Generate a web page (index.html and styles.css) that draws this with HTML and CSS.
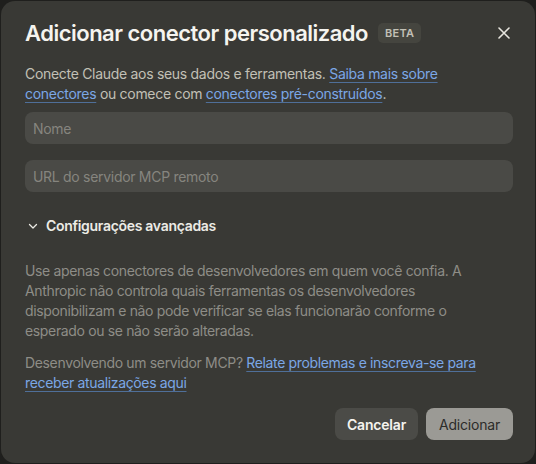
FILE: index.html
```html
<!DOCTYPE html>
<html lang="pt-BR">
<head>
    <meta charset="UTF-8">
    <meta name="viewport" content="width=device-width, initial-scale=1.0">
    <title>Adicionar conector personalizado</title>
    <link rel="stylesheet" href="styles.css">
</head>
<body>

    <div class="dialog">
        <div class="dialog-header">
            <h1>Adicionar conector personalizado</h1>
            <span class="badge">BETA</span>
            <button class="close" type="button" aria-label="Fechar">
                <svg width="14" height="14" viewBox="0 0 14 14"><path d="M2 2 L12 12 M12 2 L2 12" stroke="currentColor" stroke-width="1.6" stroke-linecap="round"/></svg>
            </button>
        </div>

        <p class="intro">Conecte Claude aos seus dados e ferramentas. <a href="#">Saiba mais sobre conectores</a> ou comece com <a href="#">conectores pré-construídos</a>.</p>

        <div class="fields">
            <input type="text" placeholder="Nome">
            <input type="text" placeholder="URL do servidor MCP remoto">
        </div>

        <button class="advanced" type="button">
            <svg width="12" height="12" viewBox="0 0 12 12"><path d="M2.5 4.5 L6 8 L9.5 4.5" fill="none" stroke="currentColor" stroke-width="1.3" stroke-linecap="round" stroke-linejoin="round"/></svg>
            Configurações avançadas
        </button>

        <p class="note note-warning">Use apenas conectores de desenvolvedores em quem você confia. A Anthropic não controla quais ferramentas os desenvolvedores disponibilizam e não pode verificar se elas funcionarão conforme o esperado ou se não serão alteradas.</p>

        <p class="note">Desenvolvendo um servidor MCP? <a href="#">Relate problemas e inscreva-se para receber atualizações aqui</a></p>

        <div class="actions">
            <button class="btn btn-cancel" type="button">Cancelar</button>
            <button class="btn btn-add" type="button">Adicionar</button>
        </div>
    </div>

</body>
</html>
```

FILE: styles.css
```css
body {
    margin: 0;
    padding: 1px;
    background-color: #1f1f1d;
    font-family: Inter, "Noto Sans", sans-serif;
    width: 534px;
    height: 462px;
}
.dialog {
    box-sizing: border-box;
    height: 462px;
    background-color: #393935;
    border-radius: 14px;
    padding: 18px 22px 0 24px;
    letter-spacing: -0.3px;
}
.dialog-header {
    display: flex;
    align-items: center;
    height: 28px;
}
.dialog-header h1 {
    margin: 0;
    font-size: 22px;
    font-weight: 600;
    letter-spacing: -0.5px;
    color: #f5f4ef;
}
.badge {
    margin-left: 10px;
    padding: 3px 7px;
    background-color: #45453f;
    border-radius: 5px;
    font-size: 11px;
    font-weight: 600;
    color: #c2c0b6;
    letter-spacing: 0.3px;
}
.close {
    margin-left: auto;
    margin-right: 2px;
    padding: 0;
    background: none;
    border: none;
    color: #e8e6df;
    display: flex;
    cursor: pointer;
}
.intro {
    max-width: 470px;
    margin: 17px 0 0;
    font-size: 14px;
    line-height: 20px;
    color: #c2c0b6;
}
a {
    color: #7ba7e6;
    text-decoration: underline;
    text-decoration-color: #4f6f99;
    text-underline-offset: 3px;
}
.fields {
    display: flex;
    flex-direction: column;
    gap: 16px;
    margin-top: 8px;
}
.fields input {
    box-sizing: border-box;
    height: 32px;
    padding: 0 8px;
    background-color: #4a4a46;
    border: none;
    border-radius: 8px;
    font-family: inherit;
    font-size: 14px;
    letter-spacing: -0.3px;
    color: #e8e6df;
    outline: none;
}
.fields input::placeholder {
    color: #86857f;
}
.advanced {
    display: flex;
    align-items: center;
    gap: 7px;
    margin-top: 25px;
    padding: 0 0 0 2px;
    background: none;
    border: none;
    font-family: inherit;
    font-size: 14px;
    font-weight: 600;
    letter-spacing: -0.3px;
    color: #ecebe5;
    cursor: pointer;
}
.note {
    margin: 27px 0 0;
    font-size: 14px;
    line-height: 20px;
    letter-spacing: -0.35px;
    color: #8e8d87;
}
.note-warning {
    max-width: 445px;
}
.note + .note {
    margin-top: 12px;
}
.actions {
    display: flex;
    justify-content: flex-end;
    gap: 8px;
    margin-top: 15px;
}
.btn {
    height: 32px;
    padding: 0 12px;
    border: none;
    border-radius: 8px;
    font-family: inherit;
    font-size: 14px;
    letter-spacing: -0.2px;
    cursor: pointer;
}
.btn-cancel {
    background-color: #4b4b47;
    color: #f5f4ef;
    font-weight: 600;
}
.btn-add {
    background-color: #9b9a95;
    color: #2c2c29;
    padding: 0 13px;
}
```
